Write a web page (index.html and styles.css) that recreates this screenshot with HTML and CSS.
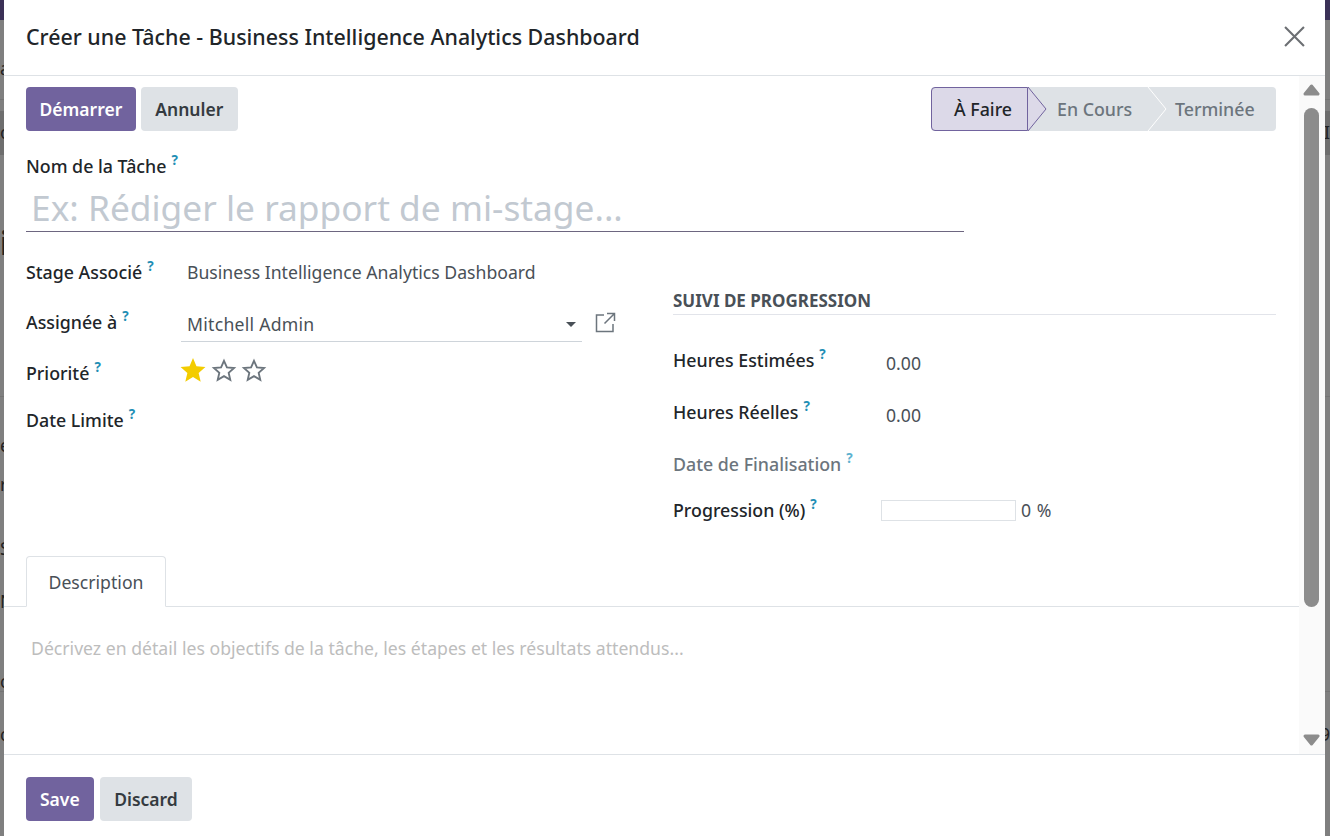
FILE: index.html
```html
<!DOCTYPE html>
<html lang="fr">
<head>
	<meta charset="UTF-8">
	<title>Créer une Tâche</title>
	<link rel="stylesheet" href="styles.css">
</head>
<body>

<!-- page behind the dialog, only its edges show -->
<div class="backdrop">
	<div class="bg-nav"></div>
	<div class="bg-row bg-top"><span class="frag frag-a">a</span></div>
	<div class="bg-row bg-thin"></div>
	<div class="bg-row bg-band"><span class="frag">ol</span><span class="frag-right">II</span></div>
	<div class="bg-row bg-mid"><span class="frag frag-big">i</span></div>
	<div class="bg-row bg-form">
		<span class="frag frag-e">e</span>
		<span class="frag frag-r">r</span>
		<span class="frag frag-s">S</span>
		<span class="frag frag-n">N</span>
		<span class="frag frag-c">c</span>
	</div>
	<div class="bg-row bg-end"><span class="frag">c</span><span class="frag-right">9</span></div>
</div>

<div class="modal">
	<header class="modal-head">
		<h4 class="modal-title">Créer une Tâche - Business Intelligence Analytics Dashboard</h4>
		<svg class="close-icon" viewBox="0 0 20 20" width="21" height="21"><path d="M1 1 19 19M19 1 1 19" fill="none" stroke="#6c6f73" stroke-width="2"/></svg>
	</header>

	<div class="modal-main">
		<div class="modal-body">
			<div class="top-bar">
				<div class="btn-group">
					<span class="btn btn-primary btn-start">Démarrer</span>
					<span class="btn btn-secondary">Annuler</span>
				</div>
				<div class="statusbar">
					<span class="stage stage-current">À Faire
						<svg class="arrow" viewBox="0 0 19 44" width="19" height="44"><path d="M0 0 18 22 0 44" fill="#dcd9e8" stroke="#71639e"/></svg>
					</span>
					<span class="stage stage-second">En Cours
						<svg class="arrow" viewBox="0 0 19 44" width="19" height="44"><path d="M0 0 18 22 0 44" fill="none" stroke="#fff"/></svg>
					</span>
					<span class="stage stage-third">Terminée</span>
				</div>
			</div>

			<div class="label name-label">Nom de la Tâche<sup>?</sup></div>
			<div class="name-input">Ex: Rédiger le rapport de mi-stage...</div>

			<div class="groups">
				<div class="group-left">
					<div class="field f-stage">
						<span class="label">Stage Associé<sup>?</sup></span>
						<span class="value">Business Intelligence Analytics Dashboard</span>
					</div>
					<div class="field f-user">
						<span class="label">Assignée à<sup>?</sup></span>
						<div class="many2one">
							<span class="value">Mitchell Admin</span>
							<span class="caret"></span>
						</div>
						<svg class="ext-icon" viewBox="0 0 21 21" width="21" height="21"><path d="M9 3H1.500V19.500H18V12M12 1.500H19.500V9M19.500 1.500 9.500 11.500" fill="none" stroke="#6c757d" stroke-width="1.500"/></svg>
					</div>
					<div class="field f-prio">
						<span class="label">Priorité<sup>?</sup></span>
						<div class="stars">
							<svg viewBox="0 0 24 24" width="26" height="26"><path d="M12 1 15.200 8.600 23.500 9.300 17.200 14.700 19.100 22.800 12 18.500 4.900 22.800 6.800 14.700 .5 9.300 8.800 8.600Z" fill="#f3cc00"/></svg>
							<svg viewBox="0 0 24 24" width="26" height="26"><path d="M12 3.500 14.700 9.600 21.300 10.200 16.300 14.600 17.800 21.100 12 17.700 6.200 21.100 7.700 14.600 2.700 10.200 9.300 9.600Z" fill="none" stroke="#6c757d" stroke-width="1.700"/></svg>
							<svg viewBox="0 0 24 24" width="26" height="26"><path d="M12 3.500 14.700 9.600 21.300 10.200 16.300 14.600 17.800 21.100 12 17.700 6.200 21.100 7.700 14.600 2.700 10.200 9.300 9.600Z" fill="none" stroke="#6c757d" stroke-width="1.700"/></svg>
						</div>
					</div>
					<div class="field f-date">
						<span class="label">Date Limite<sup>?</sup></span>
					</div>
				</div>

				<div class="group-right">
					<div class="section-title">SUIVI DE PROGRESSION</div>
					<div class="field f-hours">
						<span class="label">Heures Estimées<sup>?</sup></span>
						<span class="value">0.00</span>
					</div>
					<div class="field f-hours">
						<span class="label">Heures Réelles<sup>?</sup></span>
						<span class="value">0.00</span>
					</div>
					<div class="field f-done">
						<span class="label muted">Date de Finalisation<sup>?</sup></span>
					</div>
					<div class="field f-progress">
						<span class="label">Progression (%)<sup>?</sup></span>
						<div class="progress-box"></div>
						<span class="value">0 %</span>
					</div>
				</div>
			</div>

			<div class="tabs">
				<span class="tab">Description</span>
			</div>
			<div class="desc-placeholder">Décrivez en détail les objectifs de la tâche, les étapes et les résultats attendus...</div>
		</div>

		<div class="scrollbar">
			<svg class="scroll-up" viewBox="0 0 17 12" width="17" height="12"><path d="M8.500 2 15 10H2Z" fill="#8c8c8c" stroke="#8c8c8c" stroke-width="3" stroke-linejoin="round"/></svg>
			<span class="scroll-thumb"></span>
			<svg class="scroll-down" viewBox="0 0 17 12" width="17" height="12"><path d="M8.500 10 15 2H2Z" fill="#8c8c8c" stroke="#8c8c8c" stroke-width="3" stroke-linejoin="round"/></svg>
		</div>
	</div>

	<footer class="modal-foot">
		<span class="btn btn-primary">Save</span>
		<span class="btn btn-secondary">Discard</span>
	</footer>
</div>

</body>
</html>
```
FILE: styles.css
```css
html,
body {
    margin: 0;
    height: 836px;
    overflow: hidden;
    background: #7f7f7f;
    font-family: "Noto Sans", sans-serif;
    font-size: 17.65px;
    color: #212529;
}

/* behind the dialog */
.backdrop {
    display: flex;
    flex-direction: column;
    height: 836px;
    color: #222;
}
.bg-nav {
    height: 20px;
    background: #3b3157;
}
.bg-row {
    display: flex;
    justify-content: space-between;
    box-sizing: border-box;
    border-bottom: 1px solid #747474;
    overflow: hidden;
    line-height: 1;
}
.bg-top { height: 80px; align-items: flex-start; padding-top: 40px; }
.bg-thin { height: 11px; border-bottom: 0; }
.bg-band { height: 44px; background: #6e6e6e; align-items: center; border-bottom: 0; }
.bg-mid { height: 242px; padding-top: 72px; }
.bg-form { flex-direction: column; height: 295px; }
.bg-end { flex: 1; padding-top: 34px; border-bottom: 0; }
.frag-right { margin-left: auto; }
.frag-big { font-size: 32px; font-weight: 700; }
.frag-e { margin-top: 40px; }
.frag-r { margin-top: 17px; }
.frag-s { margin-top: 42px; }
.frag-n { margin-top: 32px; }
.frag-c { margin-top: 58px; }

/* dialog */
.modal {
    position: absolute;
    top: 0;
    bottom: 0;
    left: 4px;
    right: 5px;
    display: flex;
    flex-direction: column;
    background: #fff;
}
.modal-head {
    display: flex;
    align-items: center;
    justify-content: space-between;
    height: 76px;
    padding: 0 20px 2px 22px;
    box-sizing: border-box;
    border-bottom: 1px solid #dee2e6;
    flex: none;
}
.modal-title {
    margin: 0;
    font-size: 21.4px;
    font-weight: 500;
}
.modal-main {
    display: flex;
    flex: 1;
    min-height: 0;
}
.modal-body {
    flex: 1;
    min-width: 0;
    padding: 11px 23px 0 22px;
}
.modal-foot {
    display: flex;
    gap: 6px;
    height: 82px;
    box-sizing: border-box;
    flex: none;
    padding: 22px 22px 0;
    border-top: 1px solid #dee2e6;
}

/* buttons */
.btn {
    display: inline-flex;
    align-items: center;
    height: 44px;
    box-sizing: border-box;
    padding: 0 14px;
    border-radius: 4px;
    font-size: 17.5px;
    font-weight: 600;
}
.btn-primary {
    background: #71639e;
    color: #fff;
}
.btn-secondary {
    padding: 0 14.500px;
    background: #dee2e6;
    color: #343a40;
}
.btn-start {
    padding: 0 13.500px;
}
.btn-group {
    display: flex;
    gap: 5px;
}
.top-bar {
    display: flex;
    justify-content: space-between;
    height: 44px;
}

/* status bar */
.statusbar {
    display: flex;
    width: 345px;
    height: 44px;
    background: #dee2e6;
    border-radius: 4px;
    color: #6c757d;
    font-size: 17.8px;
    font-weight: 500;
}
.stage {
    position: relative;
    display: flex;
    align-items: center;
    box-sizing: border-box;
}
.stage-current {
    width: 97px;
    padding-left: 22px;
    background: #dcd9e8;
    border: 1px solid #71639e;
    border-radius: 4px 0 0 4px;
    color: #212529;
}
.stage-second {
    width: 120px;
    padding-left: 29px;
}
.stage-third {
    padding-left: 27px;
}
.arrow {
    position: absolute;
    top: -1px;
    left: calc(100% + 1px);
    overflow: visible;
}
.stage-second .arrow {
    top: 0;
    left: 100%;
}

/* fields */
.label {
    font-size: 17.8px;
    font-weight: 500;
    line-height: 24px;
    white-space: nowrap;
}
.label sup {
    margin-left: 5px;
    font-size: 13.500px;
    font-weight: 700;
    line-height: 0;
    color: #1f8fb5;
    vertical-align: 8px;
}
.muted {
    color: #6c757d;
}
.muted sup {
    color: #5db2cf;
}
.value {
    color: #495057;
}
.name-label {
    margin-top: 23px;
}
.name-input {
    width: 938px;
    height: 54px;
    box-sizing: border-box;
    padding: 4px 0 0 5px;
    border-bottom: 1px solid #6d6680;
    font-size: 35.3px;
    line-height: 51px;
    color: #c2c9d1;
}
.groups {
    display: flex;
    height: 324px;
}
.group-left {
    width: 647px;
    flex: none;
    padding-top: 28px;
}
.group-right {
    flex: 1;
    padding-top: 57px;
}
.field {
    display: flex;
    align-items: flex-start;
}
.group-left .label {
    width: 161px;
    flex: none;
}
.group-right .label {
    width: 213px;
    flex: none;
}
.group-left .value {
    line-height: 24px;
}
.f-stage {
    height: 50px;
}
.f-user {
    height: 51px;
}
.many2one {
    display: flex;
    align-items: center;
    justify-content: space-between;
    width: 401px;
    height: 32px;
    box-sizing: border-box;
    margin-left: -6px;
    padding: 0 6px 3px;
    border-bottom: 1px solid #ced4da;
}
.many2one .value {
    letter-spacing: .25px;
}
.caret {
    width: 0;
    height: 0;
    border-top: 5px solid #495057;
    border-left: 5px solid transparent;
    border-right: 5px solid transparent;
}
.ext-icon {
    margin: 2px 0 0 13px;
}
.f-prio {
    height: 47px;
}
.stars {
    display: flex;
    gap: 4.500px;
    margin: -4px 0 0 -7px;
}
.section-title {
    height: 26px;
    box-sizing: border-box;
    border-bottom: 1px solid #e2e4ea;
    font-size: 17px;
    font-weight: 700;
    line-height: 24px;
    color: #495057;
    margin-bottom: 33px;
}
.f-hours {
    height: 52px;
}
.f-hours .value {
    line-height: 30px;
}
.f-done {
    height: 46px;
}
.f-progress {
    align-items: center;
    height: 24px;
}
.progress-box {
    width: 135px;
    height: 21px;
    box-sizing: border-box;
    margin-left: -5px;
    border: 1px solid #dee2e6;
}
.f-progress .value {
    margin-left: 5px;
    word-spacing: 1px;
}

/* tabs */
.tabs {
    margin: 0 -23px 0 -22px;
    padding-left: 22px;
    height: 51px;
    box-sizing: border-box;
    border-bottom: 1px solid #dee2e6;
}
.tab {
    display: flex;
    align-items: center;
    justify-content: center;
    width: 140px;
    height: 51px;
    box-sizing: border-box;
    border: 1px solid #dee2e6;
    border-bottom-color: #fff;
    border-radius: 4px 4px 0 0;
    color: #495057;
}
.desc-placeholder {
    margin-top: 29px;
    padding-left: 5px;
    line-height: 24px;
    color: #bdbdbd;
}

/* scrollbar */
.scrollbar {
    position: relative;
    width: 26px;
    flex: none;
    background: #fafafa;
}
.scroll-up,
.scroll-down {
    position: absolute;
    left: 4px;
}
.scroll-up {
    top: 8px;
}
.scroll-down {
    bottom: 8px;
}
.scroll-thumb {
    position: absolute;
    top: 32px;
    left: 5px;
    width: 15px;
    height: 499px;
    border-radius: 8px;
    background: #8c8c8c;
}
```
